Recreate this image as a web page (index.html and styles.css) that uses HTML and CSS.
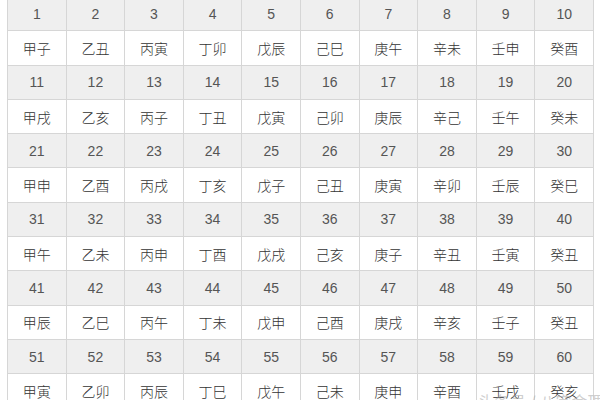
FILE: index.html
```html
<!DOCTYPE html>
<html lang="zh">
<head>
<meta charset="utf-8">
<link rel="stylesheet" href="styles.css">
</head>
<body>
<div class="page">
<table class="jiazi">
<tr class="num"><td>1</td><td>2</td><td>3</td><td>4</td><td>5</td><td>6</td><td>7</td><td>8</td><td>9</td><td>10</td></tr>
<tr class="gz"><td>甲子</td><td>乙丑</td><td>丙寅</td><td>丁卯</td><td>戊辰</td><td>己巳</td><td>庚午</td><td>辛未</td><td>壬申</td><td>癸酉</td></tr>
<tr class="num"><td>11</td><td>12</td><td>13</td><td>14</td><td>15</td><td>16</td><td>17</td><td>18</td><td>19</td><td>20</td></tr>
<tr class="gz"><td>甲戌</td><td>乙亥</td><td>丙子</td><td>丁丑</td><td>戊寅</td><td>己卯</td><td>庚辰</td><td>辛己</td><td>壬午</td><td>癸未</td></tr>
<tr class="num"><td>21</td><td>22</td><td>23</td><td>24</td><td>25</td><td>26</td><td>27</td><td>28</td><td>29</td><td>30</td></tr>
<tr class="gz"><td>甲申</td><td>乙酉</td><td>丙戌</td><td>丁亥</td><td>戊子</td><td>己丑</td><td>庚寅</td><td>辛卯</td><td>壬辰</td><td>癸巳</td></tr>
<tr class="num"><td>31</td><td>32</td><td>33</td><td>34</td><td>35</td><td>36</td><td>37</td><td>38</td><td>39</td><td>40</td></tr>
<tr class="gz"><td>甲午</td><td>乙未</td><td>丙申</td><td>丁酉</td><td>戊戌</td><td>己亥</td><td>庚子</td><td>辛丑</td><td>壬寅</td><td>癸丑</td></tr>
<tr class="num"><td>41</td><td>42</td><td>43</td><td>44</td><td>45</td><td>46</td><td>47</td><td>48</td><td>49</td><td>50</td></tr>
<tr class="gz"><td>甲辰</td><td>乙巳</td><td>丙午</td><td>丁未</td><td>戊申</td><td>己酉</td><td>庚戌</td><td>辛亥</td><td>壬子</td><td>癸丑</td></tr>
<tr class="num"><td>51</td><td>52</td><td>53</td><td>54</td><td>55</td><td>56</td><td>57</td><td>58</td><td>59</td><td>60</td></tr>
<tr class="gz"><td>甲寅</td><td>乙卯</td><td>丙辰</td><td>丁巳</td><td>戊午</td><td>己未</td><td>庚申</td><td>辛酉</td><td>壬戌</td><td>癸亥</td></tr>
</table>
<div class="watermark">头条号 / 八字命理</div>
</div>
</body>
</html>
```
FILE: styles.css
```css
html, body {
  margin: 0;
  padding: 0;
  background: #ffffff;
}
.page {
  position: relative;
  width: 600px;
  height: 400px;
  overflow: hidden;
  padding-left: 7px;
  box-sizing: border-box;
}
.jiazi {
  border-collapse: collapse;
  table-layout: fixed;
  width: 587px;
  margin-top: -4px;
}
.jiazi td {
  border: 1px solid #d6d6d6;
  height: 33.3px;
  padding: 0;
  text-align: center;
  vertical-align: middle;
}
.num td {
  background: #efefef;
  color: #555555;
  font-family: "Liberation Sans", Arial, sans-serif;
  font-size: 14px;
}
.gz td {
  background: #ffffff;
  color: #333333;
  font-family: "Noto Sans CJK SC", "Noto Sans", sans-serif;
  font-weight: 300;
  font-size: 14px;
}
.watermark {
  position: absolute;
  left: 478px;
  top: 389px;
  font-family: "Noto Sans CJK SC", sans-serif;
  font-size: 16px;
  color: rgba(160, 160, 160, 0.5);
  white-space: nowrap;
}
```
